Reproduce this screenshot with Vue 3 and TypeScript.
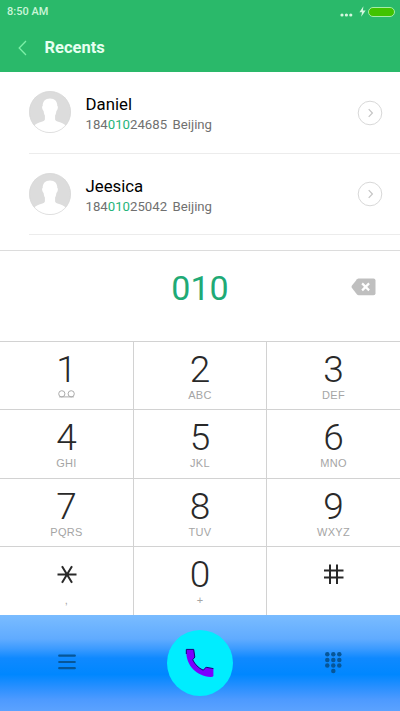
<script setup lang="ts">
interface Contact {
  name: string
  before: string
  match: string
  after: string
  place: string
}
interface Key {
  digit: string
  letters: string
}

const contacts: Contact[] = [
  { name: 'Daniel', before: '184', match: '010', after: '24685', place: 'Beijing' },
  { name: 'Jeesica', before: '184', match: '010', after: '25042', place: 'Beijing' },
]

const keys: Key[] = [
  { digit: '1', letters: '' },
  { digit: '2', letters: 'ABC' },
  { digit: '3', letters: 'DEF' },
  { digit: '4', letters: 'GHI' },
  { digit: '5', letters: 'JKL' },
  { digit: '6', letters: 'MNO' },
  { digit: '7', letters: 'PQRS' },
  { digit: '8', letters: 'TUV' },
  { digit: '9', letters: 'WXYZ' },
  { digit: '*', letters: ',' },
  { digit: '0', letters: '+' },
  { digit: '#', letters: '' },
]

const padDots: number[][] = [
  [2.3, 2.3], [8.3, 2.3], [14.3, 2.3],
  [2.3, 7.9], [8.3, 7.9], [14.3, 7.9],
  [2.3, 13.5], [8.3, 13.5], [14.3, 13.5],
  [8.3, 19.1],
]
</script>

<template>
  <div class="screen">
    <header class="header">
      <div class="status">
        <span class="time">8:50 AM</span>
        <svg class="signal" width="13" height="4" viewBox="0 0 13 4">
          <circle cx="2" cy="2" r="1.6" />
          <circle cx="6.4" cy="2" r="1.6" />
          <circle cx="10.8" cy="2" r="1.6" />
        </svg>
        <svg class="bolt" width="7" height="11" viewBox="0 0 7 11">
          <path d="M4.4 0.3 0.4 6.2H3L2.2 10.7 6.6 4.6H3.9Z" />
        </svg>
        <span class="battery"></span>
      </div>
      <div class="title-row">
        <svg class="back" width="9" height="16" viewBox="0 0 9 16">
          <path d="M8 1 1.2 8 8 15" />
        </svg>
        <h1 class="title">Recents</h1>
      </div>
    </header>

    <main class="contacts">
      <div v-for="c in contacts" :key="c.name" class="contact">
        <svg class="avatar" width="42" height="42" viewBox="0 0 42 42">
          <circle cx="21" cy="21" r="20.7" fill="#dcdcdc" />
          <path
            d="M21 7.6C16.2 7.6 13.5 10.6 13.7 15C13 15.1 12.9 16.4 13.5 18.3C13.8 19.2 14.1 19.7 14.6 19.9C14.9 22 15.3 23.4 15.9 24.5V28.6C15.5 31 9.4 31 5.2 34.4C9 39 14.5 41.5 21 41.5S33 39 36.8 34.4C32.6 31 26.5 31 26.1 28.6V24.5C26.7 23.4 27.1 22 27.4 19.9C27.9 19.7 28.2 19.2 28.5 18.3C29.1 16.4 29 15.1 28.3 15C28.5 10.6 25.8 7.6 21 7.6Z"
            fill="#fff"
          />
          <circle cx="21" cy="21" r="20.6" fill="none" stroke="#d6d6d6" stroke-width=".7" />
        </svg>
        <div class="info">
          <div class="name">{{ c.name }}</div>
          <div class="number">
            <span>{{ c.before }}<b>{{ c.match }}</b>{{ c.after }}</span>
            <span>{{ c.place }}</span>
          </div>
        </div>
        <svg class="more" width="26" height="26" viewBox="0 0 26 26">
          <circle cx="13" cy="13" r="11.8" stroke="#d8d8d8" />
          <path d="M11.7 9.2 15.4 13 11.7 16.8" stroke="#c4c4c4" stroke-width="1.2" />
        </svg>
      </div>
    </main>

    <section class="entry">
      <span class="typed">010</span>
      <svg class="erase" width="25" height="18" viewBox="0 0 25 18">
        <path d="M7.5 .5H22.5Q24.5 .5 24.5 2.5V15.2Q24.5 17.2 22.5 17.2H7.5Q6.7 17.2 6 16.4L.8 9.8Q.2 8.8 .8 7.8L6 1.3Q6.7 .5 7.5 .5Z" fill="#bfbfbf" />
        <path d="M11.1 5.4 18.1 12.4M18.1 5.4 11.1 12.4" stroke="#fff" stroke-width="2.2" />
      </svg>
    </section>

    <section class="keypad">
      <button v-for="k in keys" :key="k.digit" class="key" type="button">
        <svg v-if="k.digit === '*'" class="symbol" width="20" height="38" viewBox="0 0 20 38" aria-label="star">
          <path d="M.5 19.5H19.5M5 11.2 15 27.8M15 11.2 5 27.8" />
        </svg>
        <svg v-else-if="k.digit === '#'" class="symbol" width="20" height="38" viewBox="0 0 20 38" aria-label="pound">
          <path d="M0 15.5H19.5M0 22.5H19.5M6 9.5V29M13 9.5V29" />
        </svg>
        <span v-else class="digit">{{ k.digit }}</span>
        <svg v-if="k.digit === '1'" class="voicemail" width="17" height="8" viewBox="0 0 17 8">
          <circle cx="3.8" cy="3.8" r="3.1" />
          <circle cx="13.2" cy="3.8" r="3.1" />
          <path d="M1.2 6.9H15.8" />
        </svg>
        <span v-else class="letters">{{ k.letters }}</span>
      </button>
    </section>

    <nav class="bar">
      <svg class="menu" width="18" height="16" viewBox="0 0 18 16">
        <path d="M1.2 1.7H16.8M1.2 8H16.8M1.2 14.2H16.8" />
      </svg>
      <button class="call" type="button">
        <svg width="30" height="30" viewBox="0 0 30 30">
          <path
            d="M1.3 1.4H8.7L9.8 9Q9.5 10.3 7.6 11.6C9.9 16.4 13.5 20.2 18.3 22.2C20.2 19.8 20.9 19.2 22 19.4L28.4 20.6V28Q27.9 29 25.5 28.9C11.5 28.2 1.3 17.5 1.3 4Z"
            fill="#7a00ff"
          />
          <path d="M1.3 6V1.4H8.7L9.8 9Q9.5 10.3 7.6 11.6C9.9 16.4 13.5 20.2 18.3 22.2C20.2 19.8 20.9 19.2 22 19.4L28.4 20.6" fill="none" stroke="#180075" stroke-width="1" />
        </svg>
      </button>
      <svg class="pad" width="17" height="22" viewBox="0 0 17 22">
        <circle v-for="(d, i) in padDots" :key="i" :cx="d[0]" :cy="d[1]" r="2.25" />
      </svg>
    </nav>
  </div>
</template>

<style>
body {
  margin: 0;
}
</style>

<style scoped>
.screen {
  width: 400px;
  height: 711px;
  display: flex;
  flex-direction: column;
  overflow: hidden;
  background: #fff;
  font-family: Roboto, "Liberation Sans", sans-serif;
}
button {
  border: 0;
  padding: 0;
  margin: 0;
  background: none;
  font: inherit;
}
svg {
  display: block;
  flex: none;
}
.header {
  height: 72px;
  flex: none;
  background: #2ab96a;
}
.status {
  height: 23px;
  display: flex;
  align-items: center;
  padding: 0 5px 0 7px;
}
.time {
  flex: 1;
  font-size: 11px;
  font-weight: 500;
  color: #c9f5d8;
}
.signal {
  fill: #d4f7df;
  margin: 6px 6px 0 0;
}
.bolt {
  fill: #d4f7df;
  margin-right: 2px;
}
.battery {
  box-sizing: border-box;
  width: 27px;
  height: 10px;
  border: 1px solid #a5eda6;
  border-radius: 5px;
  background: #41c300;
}
.title-row {
  display: flex;
  align-items: center;
  height: 49px;
  padding-left: 18px;
}
.back {
  fill: none;
  stroke: #7df0a8;
  stroke-width: 1.3;
}
.title {
  margin: 0 0 0 17.5px;
  font-size: 16.5px;
  font-weight: 700;
  color: #e6fff0;
}
.contacts {
  height: 178px;
  flex: none;
}
.contact {
  box-sizing: border-box;
  height: 81.5px;
  margin-left: 29px;
  padding-right: 17px;
  display: flex;
  align-items: center;
  border-bottom: 1px solid #ececec;
}
.info {
  flex: 1;
  margin: 3px 0 0 14.5px;
}
.name {
  font-size: 16.8px;
  line-height: 22px;
  color: #000;
}
.number {
  display: flex;
  gap: 5.5px;
  font-size: 13.2px;
  line-height: 19px;
  color: #707070;
}
.number b {
  font-weight: 400;
  color: #25b47a;
}
.more {
  fill: none;
  margin-top: 1px;
}
.entry {
  box-sizing: border-box;
  height: 91px;
  flex: none;
  display: grid;
  grid-template-columns: 1fr auto 1fr;
  align-items: center;
  border-top: 1px solid #dcdcdc;
  padding: 0 24px 16px;
}
.typed {
  grid-column: 2;
  font-size: 34px;
  line-height: 40px;
  color: #1faa76;
}
.erase {
  justify-self: end;
  margin-bottom: 3px;
}
.keypad {
  height: 274px;
  flex: none;
  display: grid;
  grid-template-columns: 134px 133px 133px;
  grid-template-rows: 68px 69px 68px 69px;
}
.key {
  box-sizing: border-box;
  display: flex;
  flex-direction: column;
  align-items: center;
  border-top: 1px solid #d2d2d2;
  border-right: 1px solid #d2d2d2;
  padding-top: 8px;
}
.key:nth-child(3n) {
  border-right: 0;
}
.digit {
  height: 38px;
  font-size: 37px;
  line-height: 39px;
  font-weight: 300;
  color: #292929;
}
.symbol {
  fill: none;
  stroke: #292929;
  stroke-width: 2;
}
.letters {
  font-family: "Liberation Sans", sans-serif;
  font-size: 11px;
  line-height: 14px;
  letter-spacing: .3px;
  color: #a5a5a5;
}
.voicemail {
  margin-top: 2px;
  fill: none;
  stroke: #ababab;
}
.bar {
  height: 96px;
  flex: none;
  display: grid;
  grid-template-columns: 134px 132px 134px;
  align-items: center;
  justify-items: center;
  background: linear-gradient(#7abcff 0, #60abff 25%, #3c9bff 35%, #0f89ff 45%, #0087ff 62%, #2b90ff 76%, #4d9aff 88%, #5ba2ff 100%);
}
.menu {
  margin-bottom: 3px;
  stroke: #075698;
  stroke-width: 2.2;
  stroke-linecap: round;
}
.call {
  width: 66px;
  height: 66px;
  border-radius: 50%;
  background: #00edff;
  display: flex;
  align-items: center;
  justify-content: center;
}
.pad {
  fill: #075698;
}
</style>
